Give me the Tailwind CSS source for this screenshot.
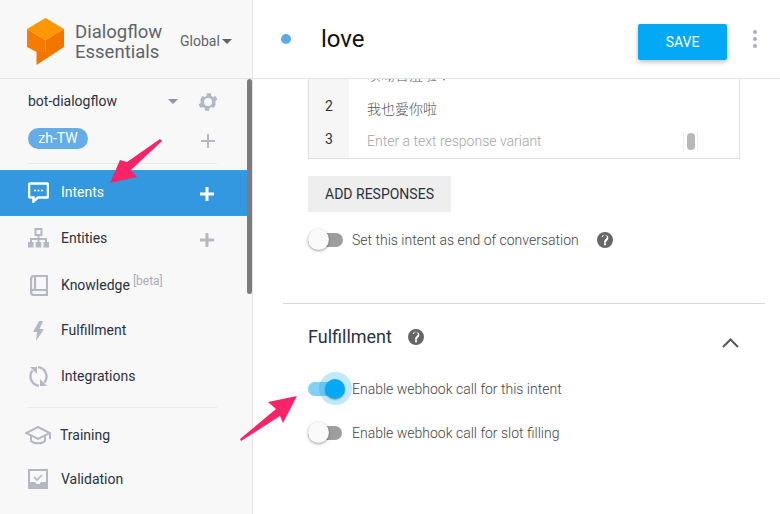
<!DOCTYPE html>
<html lang="en">
<head>
<meta charset="UTF-8">
<title>Dialogflow Essentials</title>
<script src="https://cdn.jsdelivr.net/npm/@tailwindcss/browser@4"></script>
</head>
<body class="bg-white">
<div class="relative flex h-[514px] w-[780px] overflow-hidden bg-white font-['Roboto','Noto_Sans_CJK_TC',sans-serif] text-[#2c3140]">

  <!-- sidebar -->
  <aside class="relative flex h-full w-[253px] shrink-0 flex-col border-r border-[#e4e4e4] bg-[#f8f8f8]">
    <div class="flex h-[79px] shrink-0 items-center border-b border-[#e4e4e4] pl-[27px]">
      <svg class="mt-[5px] h-[47px] w-[37px] shrink-0" viewBox="0 0 37 47">
        <path d="M18.500 0 37 11 18.500 22 0 11Z" fill="#ff9800"/>
        <path d="M0 11 18.500 22V34H9.500 L0 29Z" fill="#f57c00"/>
        <path d="M18.500 22 37 11V29L9.500 47V34H18.500Z" fill="#f27500"/>
      </svg>
      <div class="ml-[11px] mt-[5px] w-[85px] text-[18.500px] leading-[20px] text-[#5f6368]">Dialogflow<br>Essentials</div>
      <span class="ml-[20px] mt-[4px] text-[14px] text-[#5f6368]">Global</span>
      <span class="ml-[2px] mt-[4px] h-0 w-0 border-x-[5px] border-t-[5px] border-x-transparent border-t-[#5f6368]"></span>
    </div>

    <div class="flex h-[44px] shrink-0 items-center pl-[28px] pt-[1px]">
      <span class="w-[140px] text-[14px]">bot-dialogflow</span>
      <span class="h-0 w-0 border-x-[5px] border-t-[5px] border-x-transparent border-t-[#8f93a6]"></span>
      <svg class="ml-[18px] h-[24px] w-[24px]" viewBox="0 0 24 24" fill="#b4b8c4"><path d="M19.400 13a7.500 7.500 0 0 0 0-2l2.100-1.600-2-3.500-2.500 1a7.500 7.500 0 0 0-1.700-1l-.4-2.600h-4l-.4 2.600a7.500 7.500 0 0 0-1.700 1l-2.500-1-2 3.500L4.600 11a7.500 7.500 0 0 0 0 2l-2.100 1.600 2 3.500 2.500-1a7.500 7.500 0 0 0 1.700 1l.4 2.600h4l.4-2.600a7.500 7.500 0 0 0 1.700-1l2.500 1 2-3.500ZM12 16a4 4 0 1 1 0-8 4 4 0 0 1 0 8Z"/></svg>
    </div>

    <div class="flex h-[24px] shrink-0 items-center pl-[28px]">
      <span class="mt-[6px] flex h-[21px] w-[60px] shrink-0 items-center justify-center rounded-full bg-[#63ade9] text-[14px] text-white">zh-TW</span>
      <svg class="ml-[113px] mt-[12px] h-[14px] w-[14px]" viewBox="0 0 14 14" fill="#b4b8c4"><path d="M6 0h2v6h6v2H8v6H6V8H0V6h6Z"/></svg>
    </div>

    <div class="ml-[28px] mt-[16px] h-[1px] w-[189px] shrink-0 bg-[#e8e8e8]"></div>

    <!-- main nav -->
    <nav class="mt-[6px] flex flex-col">
      <a class="flex h-[46px] items-center border-y border-[#29a4ef] bg-[#3498e0] pb-[2px] pl-[28px] text-white">
        <svg class="h-[21px] w-[21px] shrink-0" viewBox="0 0 21 21" fill="none"><path d="M2 1.500h17a1 1 0 0 1 1 1v12a1 1 0 0 1-1 1h-9l-4.500 4v-4H2a1 1 0 0 1-1-1v-12a1 1 0 0 1 1-1Z" stroke="#fff" stroke-width="2.500"/><circle cx="7" cy="8.500" r="1.100" fill="#fff"/><circle cx="10.500" cy="8.500" r="1.100" fill="#fff"/><circle cx="14" cy="8.500" r="1.100" fill="#fff"/></svg>
        <span class="ml-[12px] w-[139px] text-[14px]">Intents</span>
        <svg class="mt-[3px] h-[14px] w-[14px]" viewBox="0 0 14 14" fill="#fff"><path d="M5.500 0h3v5.500H14v3H8.500V14h-3V8.500H0v-3h5.500Z"/></svg>
      </a>
      <a class="flex h-[46px] items-center pb-[2px] pl-[28px]">
        <svg class="h-[20px] w-[21px] shrink-0" viewBox="0 0 21 20" fill="none" stroke="#b4b8c4" stroke-width="2"><rect x="7.500" y="1" width="6" height="6"/><path d="M10.500 7v7M3 15v-4h15v4"/><rect x="0" y="14" width="5.500" height="5.500" fill="#b4b8c4" stroke="none"/><rect x="7.750" y="14" width="5.500" height="5.500" fill="#b4b8c4" stroke="none"/><rect x="15.500" y="14" width="5.500" height="5.500" fill="#b4b8c4" stroke="none"/></svg>
        <span class="ml-[12px] w-[139px] text-[14px]">Entities</span>
        <svg class="mt-[4px] h-[14px] w-[14px]" viewBox="0 0 14 14" fill="#b4b8c4"><path d="M5.500 0h3v5.500H14v3H8.500V14h-3V8.500H0v-3h5.500Z"/></svg>
      </a>
      <a class="flex h-[46px] items-center pl-[30px]">
        <svg class="h-[21px] w-[18px] shrink-0" viewBox="0 0 18 21" fill="none" stroke="#b4b8c4" stroke-width="2.200"><path d="M4 1h13v19H4a3 3 0 0 1-3-3V4a3 3 0 0 1 3-3Z"/><path d="M1 16.500a2.500 2.500 0 0 1 3-1.500h13M5 1v14"/></svg>
        <span class="ml-[13px] text-[14px]">Knowledge</span>
        <span class="mb-[9px] ml-[3px] text-[12px] text-[#a9adba]">[beta]</span>
      </a>
      <a class="flex h-[46px] items-center pb-[1px] pl-[33px]">
        <svg class="h-[20px] w-[11px] shrink-0" viewBox="0 0 11 20" fill="#b4b8c4"><path d="M6 0 0 11h4l-1 9 8-12H6.500L10 0Z"/></svg>
        <span class="ml-[17px] text-[14px]">Fulfillment</span>
      </a>
      <a class="flex h-[46px] items-center pb-[1px] pl-[28px]">
        <svg class="h-[21px] w-[21px] shrink-0" viewBox="0 0 21 21" fill="none" stroke="#b4b8c4" stroke-width="2.300"><path d="M11 19.800A9.500 9.500 0 0 1 4.500 4.500"/><path d="M10 1.200A9.500 9.500 0 0 1 16.500 16.500"/><path d="M2 1h7v7Z" fill="#b4b8c4" stroke="none"/><path d="M19 20h-7v-7Z" fill="#b4b8c4" stroke="none"/></svg>
        <span class="ml-[12px] text-[14px]">Integrations</span>
      </a>
    </nav>

    <div class="ml-[28px] mt-[7px] h-[1px] w-[189px] shrink-0 bg-[#e8e8e8]"></div>

    <a class="mt-[4px] flex h-[46px] shrink-0 items-center pl-[25px]">
      <svg class="h-[19px] w-[26px] shrink-0" viewBox="0 0 26 19" fill="none" stroke="#b4b8c4" stroke-width="2"><path d="M13 1 25 7 13 13 1 7Z"/><path d="M6 10v5c3 3 11 3 14 0v-5M25 7v6"/></svg>
      <span class="ml-[9px] text-[14px]">Training</span>
    </a>
    <a class="mt-[-2px] flex h-[46px] shrink-0 items-center pl-[28px]">
      <svg class="h-[20px] w-[20px] shrink-0" viewBox="0 0 20 20"><rect width="20" height="20" fill="#b4b8c4"/><path d="M2 2h16v11h-5l-1.500 2h-3L7 13H2Z" fill="#f8f8f8"/><path d="m6 8 3 3 5-5" fill="none" stroke="#b4b8c4" stroke-width="1.700"/></svg>
      <span class="ml-[13px] text-[14px]">Validation</span>
    </a>

    <!-- scrollbar -->
    <div class="absolute right-0 top-[79px] h-[215px] w-[5px] rounded-full bg-[#7c7c7c]"></div>
  </aside>

  <!-- main panel -->
  <main class="flex h-full min-w-0 flex-1 flex-col">
    <header class="relative z-10 flex h-[79px] shrink-0 items-center border-b border-[#e4e4e4] bg-white pl-[28px]">
      <span class="h-[10px] w-[10px] rounded-full bg-[#5ea9e8]"></span>
      <h1 class="ml-[30px] w-[317px] text-[24px] leading-[28px] text-[#111]">love</h1>
      <button class="mt-[6px] h-[36px] w-[89px] rounded-[2px] bg-[#03a9f4] text-[14px] text-white shadow-[0_2px_5px_rgba(0,0,0,0.25)]">SAVE</button>
      <span class="ml-[26px] flex flex-col gap-[3px]">
        <i class="h-[4px] w-[4px] rounded-full bg-[#a9adba]"></i>
        <i class="h-[4px] w-[4px] rounded-full bg-[#a9adba]"></i>
        <i class="h-[4px] w-[4px] rounded-full bg-[#a9adba]"></i>
      </span>
    </header>

    <div class="min-h-0 flex-1 overflow-hidden">
      <!-- text responses, scrolled partly under the header -->
      <div class="ml-[55px] mt-[-19px] w-[432px] border border-[#dfdfdf] text-[14px]">
        <div class="flex h-[32px] items-center">
          <span class="flex h-full w-[40px] items-center justify-center bg-[#f6f6f6] pb-[8px]">1</span>
          <span class="mb-[3px] ml-[18px] font-light text-[#555]">噢呦害羞啦！</span>
        </div>
        <div class="flex h-[32px] items-center">
          <span class="flex h-full w-[40px] items-center justify-center bg-[#f6f6f6] pb-[6px] text-[#333]">2</span>
          <span class="ml-[18px] font-light text-[#555]">我也愛你啦</span>
        </div>
        <div class="flex h-[33px] items-center">
          <span class="flex h-full w-[40px] items-center justify-center bg-[#f6f6f6] pb-[5px] text-[#333]">3</span>
          <span class="mb-[1px] ml-[18px] w-[316px] font-light text-[#a5a5a5]">Enter a text response variant</span>
          <span class="flex h-[20px] w-[15px] items-center justify-center border-x border-[#efefef]"><i class="h-[17px] w-[8px] rounded-full bg-[#b8b8b8]"></i></span>
        </div>
      </div>

      <button class="ml-[55px] mt-[17px] block h-[36px] w-[143px] rounded-[1px] bg-[#eeeeee] text-[14px] text-[#2c3140]">ADD RESPONSES</button>

      <div class="ml-[55px] mt-[17px] flex h-[22px] items-center">
        <span class="relative block h-[14px] w-[35px] rounded-full bg-[#9e9e9e]">
          <i class="absolute left-0 top-[-4px] h-[21px] w-[21px] rounded-full bg-[#fafafa] shadow-[0_1px_3px_rgba(0,0,0,0.4)]"></i>
        </span>
        <span class="ml-[9px] text-[14px] font-light text-[#444]">Set this intent as end of conversation</span>
        <svg class="ml-[18px] h-[16px] w-[16px]" viewBox="0 0 24 24" fill="#666"><path d="M12 0a12 12 0 1 0 0 24 12 12 0 0 0 0-24Zm1.500 20h-3v-3h3Zm3-8.600-1.300 1.300c-1.100 1.100-1.700 1.900-1.700 3.300h-3v-.700c0-1.500.6-2.800 1.700-3.900l1.800-1.900c.5-.5.800-1.200.8-2a3 3 0 0 0-6 0H6.800a5.200 5.200 0 1 1 9.700 3.900Z"/></svg>
      </div>

      <div class="ml-[30px] mt-[52px] h-[1px] w-[482px] bg-[#ddd5d5]"></div>

      <section class="ml-[55px] w-[431px]">
        <div class="mb-[7px] flex h-[67px] items-center pb-[1px]">
          <h2 class="text-[18px] font-normal leading-[24px]">Fulfillment</h2>
          <svg class="ml-[16px] h-[16px] w-[16px]" viewBox="0 0 24 24" fill="#666"><path d="M12 0a12 12 0 1 0 0 24 12 12 0 0 0 0-24Zm1.500 20h-3v-3h3Zm3-8.600-1.300 1.300c-1.100 1.100-1.700 1.900-1.700 3.300h-3v-.700c0-1.500.6-2.800 1.700-3.900l1.800-1.900c.5-.5.800-1.200.8-2a3 3 0 0 0-6 0H6.800a5.200 5.200 0 1 1 9.700 3.900Z"/></svg>
          <svg class="ml-auto mt-[11px] h-[10px] w-[17px]" viewBox="0 0 17 10" fill="none" stroke="#555" stroke-width="2"><path d="m1 9 7.500-7.500L16 9"/></svg>
        </div>

        <div class="flex h-[22px] items-center">
          <span class="relative block h-[14px] w-[34px] rounded-full bg-[#82d0f8]">
            <i class="absolute right-[-10px] top-[-10px] h-[33px] w-[33px] rounded-full bg-[#03a9f4]/25"></i>
            <i class="absolute right-[-3px] top-[-3px] h-[20px] w-[20px] rounded-full bg-[#03a9f4] shadow-[0_1px_2px_rgba(0,0,0,0.3)]"></i>
          </span>
          <span class="ml-[10px] text-[14px] font-light text-[#444]">Enable webhook call for this intent</span>
        </div>
        <div class="mt-[22px] flex h-[22px] items-center">
          <span class="relative block h-[14px] w-[34px] rounded-full bg-[#9e9e9e]">
            <i class="absolute left-0 top-[-4px] h-[21px] w-[21px] rounded-full bg-[#fafafa] shadow-[0_1px_3px_rgba(0,0,0,0.4)]"></i>
          </span>
          <span class="ml-[10px] text-[14px] font-light text-[#444]">Enable webhook call for slot filling</span>
        </div>
      </section>
    </div>
  </main>

  <!-- annotation arrows drawn over the screenshot -->
  <svg class="absolute left-0 top-0 z-20 h-[514px] w-[780px]" viewBox="0 0 780 514" fill="#f8246a">
    <path d="M110 183 137 177 131 170 162 141 160 139 127 162 120 160Z"/>
    <path d="M297 396 268 402 276 409 240 439 241 441 280 416 283 423Z"/>
  </svg>
</div>
</body>
</html>
